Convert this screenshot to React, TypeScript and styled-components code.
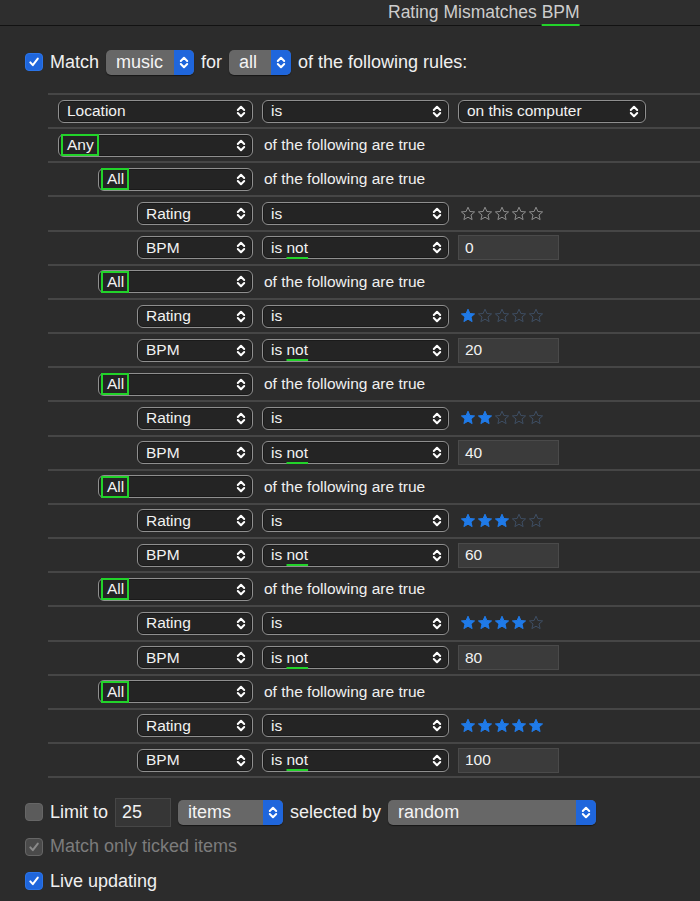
import styled, { createGlobalStyle } from "styled-components";

const GlobalStyle = createGlobalStyle`
  html, body {
    margin: 0;
    padding: 0;
    background: #2c2c2c;
  }
  body {
    font-family: "Liberation Sans", Arial, sans-serif;
    color: #e8e8e8;
  }
`;

const groups = [
  { stars: 0, bpm: "0" },
  { stars: 1, bpm: "20" },
  { stars: 2, bpm: "40" },
  { stars: 3, bpm: "60" },
  { stars: 4, bpm: "80" },
  { stars: 5, bpm: "100" },
];

const Chevrons = ({ color = "#fff" }: { color?: string }) => (
  <svg width="10" height="15" viewBox="0 0 10 15">
    <path
      d="M1.8 6 L5 2.8 L8.2 6 M1.8 9 L5 12.2 L8.2 9"
      fill="none"
      stroke={color}
      strokeWidth="2"
      strokeLinecap="round"
      strokeLinejoin="round"
    />
  </svg>
);

const Check = ({ color = "#fff" }: { color?: string }) => (
  <svg width="12" height="12" viewBox="0 0 12 12">
    <path
      d="M2.3 6.4 L4.8 9.2 L9.8 2.6"
      fill="none"
      stroke={color}
      strokeWidth="2"
      strokeLinecap="round"
      strokeLinejoin="round"
    />
  </svg>
);

const Star = ({ on, dim }: { on: boolean; dim: boolean }) => (
  <svg width="16" height="16" viewBox="0 0 16 16">
    <path
      d="M8 1.2l1.9 4.3 4.7.4-3.6 3.1 1.1 4.6L8 11.2l-4.1 2.4 1.1-4.6L1.4 5.9l4.7-.4z"
      fill={on ? "#1f7ae8" : "none"}
      stroke={on ? "#1f7ae8" : dim ? "#3e4e63" : "#8e8e8e"}
      strokeWidth="1"
      strokeLinejoin="round"
    />
  </svg>
);

const CheckBox = ({ state }: { state: "on" | "off" | "disabled" }) => (
  <Box $state={state}>
    {state === "on" && <Check />}
    {state === "disabled" && <Check color="#8a8a8a" />}
  </Box>
);

const AccentPopup = ({ label, width }: { label: string; width: number }) => (
  <BluePopup $width={width}>
    <span>{label}</span>
    <Stepper>
      <Chevrons />
    </Stepper>
  </BluePopup>
);

const RulePopup = ({
  width,
  children,
}: {
  width: number;
  children: React.ReactNode;
}) => (
  <Popup $width={width}>
    <PopupText>{children}</PopupText>
    <Chevrons />
  </Popup>
);

const Stars = ({ count }: { count: number }) => (
  <StarRow>
    {[0, 1, 2, 3, 4].map((i) => (
      <Star key={i} on={i < count} dim={count > 0} />
    ))}
  </StarRow>
);

export default function App() {
  return (
    <Window>
      <GlobalStyle />
      <TitleBar>
        Rating Mismatches <Marked $offset={6}>BPM</Marked>
      </TitleBar>

      <MatchRow>
        <CheckBox state="on" />
        <Label>Match</Label>
        <AccentPopup label="music" width={88} />
        <Label>for</Label>
        <AccentPopup label="all" width={62} />
        <Label>of the following rules:</Label>
      </MatchRow>

      <RuleList>
        <RuleRow $indent={10}>
          <RulePopup width={195}>Location</RulePopup>
          <RulePopup width={187}>is</RulePopup>
          <RulePopup width={188}>on this computer</RulePopup>
        </RuleRow>
        <RuleRow $indent={10}>
          <RulePopup width={195}>
            <Boxed>Any</Boxed>
          </RulePopup>
          <RuleText>of the following are true</RuleText>
        </RuleRow>
        {groups.map((g) => (
          <Group key={g.bpm}>
            <RuleRow $indent={50}>
              <RulePopup width={155}>
                <Boxed>All</Boxed>
              </RulePopup>
              <RuleText>of the following are true</RuleText>
            </RuleRow>
            <RuleRow $indent={89}>
              <RulePopup width={116}>Rating</RulePopup>
              <RulePopup width={187}>is</RulePopup>
              <Stars count={g.stars} />
            </RuleRow>
            <RuleRow $indent={89}>
              <RulePopup width={116}>BPM</RulePopup>
              <RulePopup width={187}>
                is <Marked $offset={4}>not</Marked>
              </RulePopup>
              <ValueField>{g.bpm}</ValueField>
            </RuleRow>
          </Group>
        ))}
      </RuleList>

      <Footer>
        <FooterRow>
          <CheckBox state="off" />
          <Label>Limit to</Label>
          <LimitField>25</LimitField>
          <AccentPopup label="items" width={105} />
          <Label>selected by</Label>
          <AccentPopup label="random" width={208} />
        </FooterRow>
        <FooterRow>
          <CheckBox state="disabled" />
          <Label $muted>Match only ticked items</Label>
        </FooterRow>
        <FooterRow>
          <CheckBox state="on" />
          <Label>Live updating</Label>
        </FooterRow>
      </Footer>
    </Window>
  );
}

const Window = styled.div`
  width: 700px;
  height: 901px;
  overflow: hidden;
  background: #2c2c2c;
`;

const TitleBar = styled.div`
  height: 25px;
  display: flex;
  align-items: center;
  padding-left: 388px;
  background: #2e2e2e;
  border-bottom: 1px solid #121212;
  color: #cdcdcd;
  font-size: 17.5px;
  white-space: pre;
`;

const Marked = styled.span<{ $offset: number }>`
  text-decoration: underline;
  text-decoration-color: #22d32a;
  text-decoration-thickness: 2px;
  text-underline-offset: ${(p) => p.$offset}px;
`;

const MatchRow = styled.div`
  height: 30px;
  margin-top: 21px;
  padding-left: 25px;
  display: flex;
  align-items: center;
  gap: 7px;
`;

const Label = styled.span<{ $muted?: boolean }>`
  font-size: 18px;
  color: ${(p) => (p.$muted ? "#7c7c7c" : "#f0f0f0")};
  white-space: nowrap;
`;

const Box = styled.div<{ $state: "on" | "off" | "disabled" }>`
  width: 18px;
  height: 18px;
  box-sizing: border-box;
  border-radius: 4px;
  display: flex;
  align-items: center;
  justify-content: center;
  background: ${(p) =>
    p.$state === "on" ? "#1f66dc" : p.$state === "off" ? "#5b5b5b" : "#4a4a4a"};
  border: 1px solid
    ${(p) => (p.$state === "on" ? "#2a74e8" : "#666")};
`;

const BluePopup = styled.div<{ $width: number }>`
  width: ${(p) => p.$width}px;
  height: 25px;
  display: flex;
  align-items: stretch;
  border-radius: 5px;
  overflow: hidden;
  background: #676767;
  box-shadow: 0 1px 1px rgba(0, 0, 0, 0.5);
  font-size: 18px;
  color: #f4f4f4;

  span {
    flex: 1;
    display: flex;
    align-items: center;
    padding-left: 10px;
  }
`;

const Stepper = styled.div`
  width: 20px;
  display: flex;
  align-items: center;
  justify-content: center;
  background: #1f66dc;
`;

const RuleList = styled.div`
  margin-top: 16px;
  margin-left: 48px;
  border-bottom: 2px solid #464646;
`;

const Group = styled.div``;

const RuleRow = styled.div<{ $indent: number }>`
  height: 32.16px;
  border-top: 2px solid #464646;
  display: flex;
  align-items: center;
  gap: 9px;
  padding-left: ${(p) => p.$indent}px;
`;

const Popup = styled.div<{ $width: number }>`
  width: ${(p) => p.$width}px;
  height: 23px;
  box-sizing: border-box;
  display: flex;
  align-items: center;
  padding: 0 6px 0 2px;
  border: 1px solid #8f8f8f;
  border-radius: 6px;
  background: #242424;
  box-shadow: inset 0 0 0 1px #1a1a1a;
  font-size: 15.5px;
  color: #f2f2f2;
`;

const PopupText = styled.div`
  flex: 1;
  display: flex;
  align-items: center;
  padding-left: 6px;
  white-space: pre;
`;

const Boxed = styled.span`
  margin-left: -5px;
  padding: 1px 4px 1px 5px;
  outline: 2px solid #22d32a;
  outline-offset: -1px;
`;

const RuleText = styled.span`
  margin-left: 2px;
  font-size: 15.5px;
  color: #f0f0f0;
`;

const StarRow = styled.div`
  display: flex;
  gap: 1px;
  margin-left: 2px;
`;

const ValueField = styled.div`
  width: 101px;
  height: 25px;
  box-sizing: border-box;
  display: flex;
  align-items: center;
  padding-left: 6px;
  background: #3b3b3b;
  border: 1px solid #4a4a4a;
  font-size: 15.5px;
  color: #f2f2f2;
`;

const Footer = styled.div`
  padding-top: 17px;
  padding-left: 25px;
`;

const FooterRow = styled.div`
  height: 34.5px;
  display: flex;
  align-items: center;
  gap: 7px;
`;

const LimitField = styled.div`
  width: 56px;
  height: 29px;
  box-sizing: border-box;
  display: flex;
  align-items: center;
  padding-left: 6px;
  background: #363636;
  border: 1px solid #474747;
  font-size: 18px;
  color: #f2f2f2;
`;
